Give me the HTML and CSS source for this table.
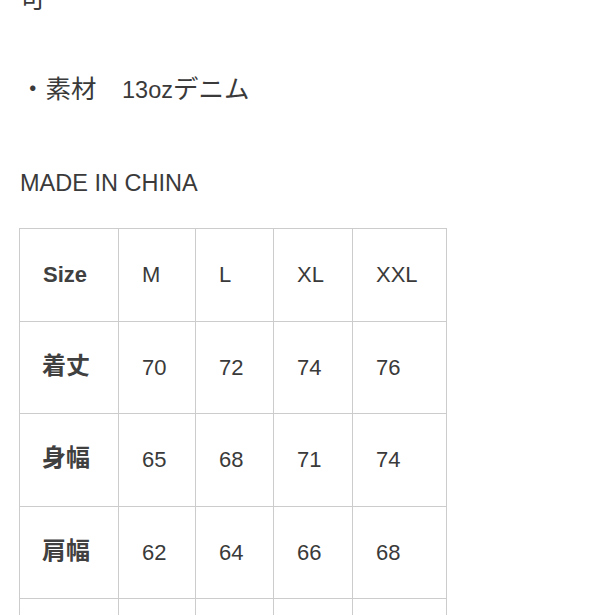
FILE: index.html
```html
<!DOCTYPE html>
<html lang="ja">
<head>
<meta charset="utf-8">
<title>商品詳細</title>
<link rel="stylesheet" href="styles.css">
</head>
<body>
<main class="page">
  <p class="line line-top"><span class="ja">可</span></p>
  <p class="line line-material"><span class="ja">・素材　</span>13oz<span class="ja">デニム</span></p>
  <p class="line line-origin">MADE IN CHINA</p>
  <div class="size-table">
    <div class="cell head">Size</div>
    <div class="cell">M</div>
    <div class="cell">L</div>
    <div class="cell">XL</div>
    <div class="cell">XXL</div>

    <div class="cell head head-ja">着丈</div>
    <div class="cell">70</div>
    <div class="cell">72</div>
    <div class="cell">74</div>
    <div class="cell">76</div>

    <div class="cell head head-ja">身幅</div>
    <div class="cell">65</div>
    <div class="cell">68</div>
    <div class="cell">71</div>
    <div class="cell">74</div>

    <div class="cell head head-ja">肩幅</div>
    <div class="cell">62</div>
    <div class="cell">64</div>
    <div class="cell">66</div>
    <div class="cell">68</div>

    <div class="cell head head-ja">袖丈</div>
    <div class="cell">60</div>
    <div class="cell">61</div>
    <div class="cell">62</div>
    <div class="cell">63</div>
  </div>
</main>
</body>
</html>
```
FILE: styles.css
```css
html, body {
  margin: 0;
  padding: 0;
  background: #ffffff;
}

body {
  font-family: "Liberation Sans", "Noto Sans CJK JP", sans-serif;
  color: #3a3a3a;
  overflow: hidden;
  height: 615px;
}

.page {
  padding: 0 0 0 20px;
}

.line {
  margin: 0;
  font-size: 23.5px;
  line-height: 34px;
  white-space: nowrap;
}

.ja {
  font-family: "Noto Sans CJK JP", sans-serif;
  font-size: 25.5px;
  line-height: 34px;
}

.line-top {
  margin-top: -20px;
}

.line-material {
  margin-top: 53px;
}

.line-origin {
  margin-top: 59px;
}

.size-table {
  display: grid;
  grid-template-columns: 99px 77px 78px 79px 94px;
  grid-template-rows: 93px 92px 93px 92px 93px;
  margin-top: 28px;
  margin-left: -1px;
  width: max-content;
  border-top: 1px solid #cccccc;
  border-left: 1px solid #cccccc;
}

.cell {
  display: flex;
  align-items: center;
  padding-left: 23px;
  border-right: 1px solid #cccccc;
  border-bottom: 1px solid #cccccc;
  font-size: 22px;
  line-height: 1;
  color: #3a3a3a;
}

.head {
  font-weight: 700;
  color: #404040;
}

.head-ja {
  font-family: "Noto Sans CJK JP", sans-serif;
  font-size: 24px;
  padding-left: 22px;
  padding-bottom: 8px;
}
```
